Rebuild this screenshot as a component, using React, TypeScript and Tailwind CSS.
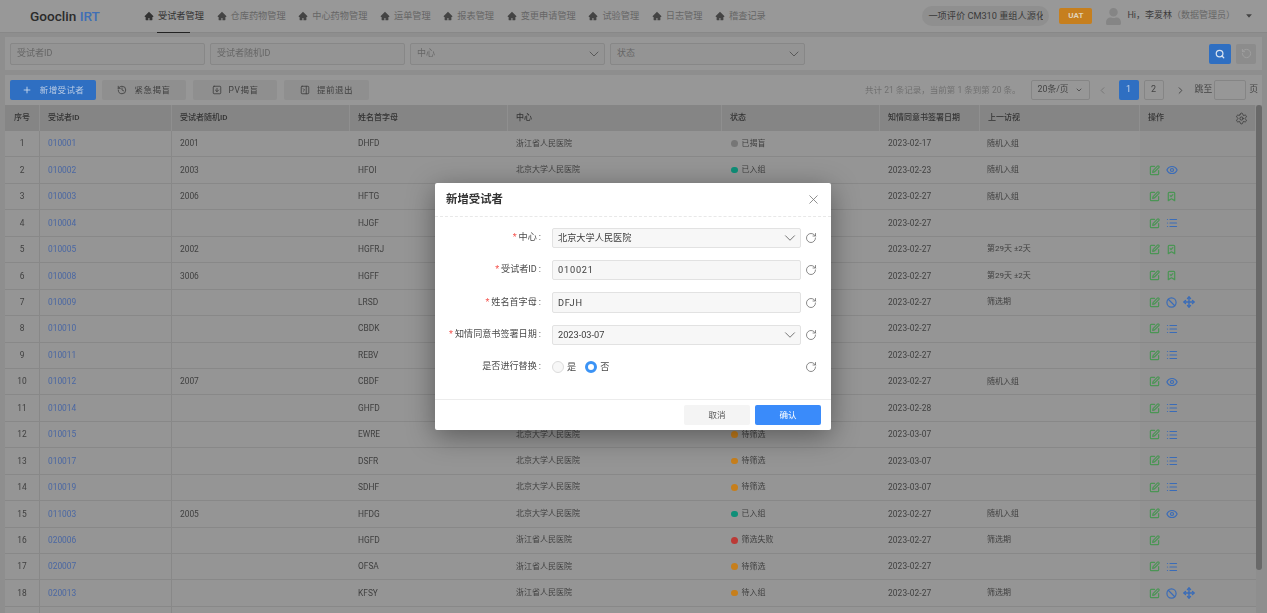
import { AiFillCaretDown, AiFillHome } from 'react-icons/ai';
import { FaUser } from 'react-icons/fa';
import {
  Ban,
  BookmarkCheck,
  ChevronDown,
  ChevronLeft,
  ChevronRight,
  Eye,
  History,
  List,
  Move,
  PanelRightClose,
  Plus,
  RotateCcw,
  RotateCw,
  Search,
  Settings,
  SquareArrowDown,
  SquarePen,
  X,
} from 'lucide-react';

const navItems = ['受试者管理', '仓库药物管理', '中心药物管理', '运单管理', '报表管理', '变更申请管理', '试验管理', '日志管理', '稽查记录'];

const columns = ['序号', '受试者ID', '受试者随机ID', '姓名首字母', '中心', '状态', '知情同意书签署日期', '上一访视', '操作'];

const BJ = '北京大学人民医院';
const ZJ = '浙江省人民医院';

const dotColors: Record<string, string> = {
  已揭盲: 'bg-[#767676]',
  已入组: 'bg-[#0f8f78]',
  待筛选: 'bg-[#c77f1c]',
  待入组: 'bg-[#c77f1c]',
  筛选失败: 'bg-[#bb3a36]',
};

type Row = [string, string, string, string, string, string, string, string];

const rows: Row[] = [
  ['010001', '2001', 'DHFD', ZJ, '已揭盲', '2023-02-17', '随机入组', ''],
  ['010002', '2003', 'HFOI', BJ, '已入组', '2023-02-23', '随机入组', 'ev'],
  ['010003', '2006', 'HFTG', BJ, '已入组', '2023-02-27', '随机入组', 'ec'],
  ['010004', '', 'HJGF', BJ, '待筛选', '2023-02-27', '', 'el'],
  ['010005', '2002', 'HGFRJ', BJ, '已入组', '2023-02-27', '第29天 ±2天', 'ec'],
  ['010008', '3006', 'HGFF', BJ, '已入组', '2023-02-27', '第29天 ±2天', 'ec'],
  ['010009', '', 'LRSD', BJ, '待入组', '2023-02-27', '筛选期', 'ebm'],
  ['010010', '', 'CBDK', BJ, '待筛选', '2023-02-27', '', 'el'],
  ['010011', '', 'REBV', BJ, '待筛选', '2023-02-27', '', 'el'],
  ['010012', '2007', 'CBDF', BJ, '已入组', '2023-02-27', '随机入组', 'ev'],
  ['010014', '', 'GHFD', BJ, '待筛选', '2023-02-28', '', 'el'],
  ['010015', '', 'EWRE', BJ, '待筛选', '2023-03-07', '', 'el'],
  ['010017', '', 'DSFR', BJ, '待筛选', '2023-03-07', '', 'el'],
  ['010019', '', 'SDHF', BJ, '待筛选', '2023-03-07', '', 'el'],
  ['011003', '2005', 'HFDG', BJ, '已入组', '2023-02-27', '随机入组', 'ev'],
  ['020006', '', 'HGFD', ZJ, '筛选失败', '2023-02-27', '筛选期', 'e'],
  ['020007', '', 'OFSA', ZJ, '待筛选', '2023-02-27', '', 'el'],
  ['020013', '', 'KFSY', ZJ, '待入组', '2023-02-27', '筛选期', 'ebm'],
];

const gridCols = 'grid grid-cols-[35px_132px_178px_158px_214px_158px_100px_160px_116px]';

function OpIcon({ kind }: { kind: string }) {
  if (kind === 'e') return <SquarePen size={11} strokeWidth={2.6} className="text-[#4b9555]" />;
  if (kind === 'c') return <BookmarkCheck size={11} strokeWidth={2.6} className="text-[#4b9555]" />;
  if (kind === 'v') return <Eye size={12} strokeWidth={2.4} className="text-[#3a6cb8]" />;
  if (kind === 'l') return <List size={12} strokeWidth={2.4} className="text-[#3a6cb8]" />;
  if (kind === 'b') return <Ban size={11} strokeWidth={2.6} className="text-[#3a6cb8]" />;
  return <Move size={12} strokeWidth={2.8} className="text-[#3a6cb8]" />;
}

function FilterBox({ label, select }: { label: string; select?: boolean }) {
  return (
    <div className="flex h-[22px] w-[195px] items-center justify-between rounded-[2px] border border-[#878787] bg-[#949494] pl-[6px] pr-[2px] text-[9px] text-[#666]">
      <span>{label}</span>
      {select && <ChevronDown size={16} strokeWidth={1.4} className="text-[#555]" />}
    </div>
  );
}

function ToolButton({ icon, label, width }: { icon: React.ReactNode; label: string; width: string }) {
  return (
    <div className={`flex h-[20px] items-center justify-center gap-[7px] rounded-[2px] bg-[#8f8f8f] text-[8.5px] tracking-[0.5px] text-[#3f3f3f] ${width}`}>
      {icon}
      <span>{label}</span>
    </div>
  );
}

function ModalField({ label, required, children }: { label: string; required?: boolean; children: React.ReactNode }) {
  return (
    <div className="flex h-[20.5px] items-center">
      <div className="flex w-[106px] items-center justify-end text-[9.1px] whitespace-nowrap text-[#4a4a4a]">
        {required && <span className="mr-[2px] text-[#f5544f]">*</span>}
        <span>{label}</span>
        <span className="ml-[2px]">:</span>
      </div>
      <div className="ml-[11px] w-[249px]">{children}</div>
      <RotateCw size={12} strokeWidth={1.5} className="ml-[4px] text-[#666]" />
    </div>
  );
}

function ModalInput({ value, select, wide }: { value: string; select?: boolean; wide?: boolean }) {
  return (
    <div className="flex h-[20.5px] items-center justify-between rounded-[2px] border border-[#e2e2e2] bg-[#f7f7f7] pl-[5px] pr-[1px] text-[9.2px] text-[#3c3c3c]">
      <span className={wide ? 'tracking-[0.8px]' : ''}>{value}</span>
      {select && <ChevronDown size={18} strokeWidth={1.2} className="text-[#666]" />}
    </div>
  );
}

export default function App() {
  return (
    <div className="relative h-screen overflow-hidden bg-[#8e8e8e] font-['Roboto','Noto_Sans_CJK_SC',sans-serif]">
      <div className="blur-[0.4px]">
        {/* Top bar */}
        <div className="flex h-[33px] items-center border-b border-[#888] bg-[#989898] pl-[30px] pr-[14px]">
          <div className="w-[71px] text-[13.6px] font-medium whitespace-nowrap text-[#2b2b2b]">
            Gooclin <span className="text-[#3f6fb5]">IRT</span>
          </div>
          <div className="ml-[43px] flex items-center gap-[12.6px]">
            {navItems.map((item, i) => (
              <div key={item} className="relative flex h-[33px] items-center gap-[4px]">
                <AiFillHome size={10} className={i === 0 ? 'text-[#333]' : 'text-[#444]'} />
                <span className={`text-[9.2px] ${i === 0 ? 'text-[#333]' : 'text-[#666]'}`}>{item}</span>
                {i === 0 && <div className="absolute bottom-0 left-[13px] h-[1px] w-[33px] bg-[#222]" />}
              </div>
            ))}
          </div>
          <div className="ml-auto flex h-[20px] w-[127px] items-center rounded-full bg-[#8f8f8f] px-[6px]">
            <div className="overflow-hidden text-[9.2px] whitespace-nowrap text-[#3a3a3a]">一项评价 CM310 重组人源化单抗</div>
          </div>
          <div className="ml-[10px] flex h-[16px] w-[33px] items-center justify-center rounded-[2px] bg-[#c67f1e] text-[8px] font-bold text-[#e0d2b8]">
            UAT
          </div>
          <div className="ml-[12px] flex w-[18px] justify-center">
            <FaUser size={17} className="text-[#858585]" />
          </div>
          <div className="ml-[5px] text-[9px] whitespace-nowrap text-[#3d3d3d]">
            Hi，李爱林<span className="text-[#666]">（数据管理员）</span>
          </div>
          <AiFillCaretDown size={8} className="ml-[10px] text-[#444]" />
        </div>

        {/* Filters */}
        <div className="mx-[5px] mt-[4px] flex h-[33px] items-center gap-[5px] bg-[#979797] px-[5px]">
          <FilterBox label="受试者ID" />
          <FilterBox label="受试者随机ID" />
          <FilterBox label="中心" select />
          <FilterBox label="状态" select />
          <div className="ml-auto flex items-center gap-[5px] pr-[1px]">
            <div className="flex h-[20px] w-[22px] items-center justify-center rounded-[2px] bg-[#2f6fc2]">
              <Search size={10} strokeWidth={3} className="text-[#d8e2f0]" />
            </div>
            <div className="flex h-[20px] w-[20px] items-center justify-center rounded-[2px] bg-[#8c8c8c]">
              <RotateCcw size={11} className="text-[#a0a0a0]" />
            </div>
          </div>
        </div>

        {/* Toolbar */}
        <div className="mx-[5px] mt-[5px] flex h-[30px] items-center bg-[#979797] pl-[5px]">
          <div className="flex h-[20px] w-[86px] items-center justify-center gap-[8px] rounded-[2px] bg-[#2f6fc2] text-[8.5px] tracking-[0.4px] text-[#b9cbe4]">
            <Plus size={10} strokeWidth={2} className="text-[#d5e0ef]" />
            <span>新增受试者</span>
          </div>
          <div className="ml-[6px] flex gap-[7px]">
            <ToolButton icon={<History size={10} />} label="紧急揭盲" width="w-[84px]" />
            <ToolButton icon={<SquareArrowDown size={10} />} label="PV揭盲" width="w-[84px]" />
            <ToolButton icon={<PanelRightClose size={10} />} label="提前退出" width="w-[85px]" />
          </div>
          <div className="ml-auto text-[8.5px] text-[#707070]">共计 21 条记录，当前第 1 条到第 20 条。</div>
          <div className="ml-[10px] flex h-[20px] w-[59px] items-center justify-center gap-[6px] rounded-[2px] border border-[#858585] text-[8.8px] text-[#444]">
            20条/页
            <ChevronDown size={8} strokeWidth={2.5} />
          </div>
          <ChevronLeft size={11} className="ml-[7px] text-[#757575]" />
          <div className="ml-[11px] flex h-[20px] w-[20px] items-center justify-center rounded-[2px] bg-[#2f6fc2] text-[9px] text-[#c8d6ea]">1</div>
          <div className="ml-[5px] flex h-[20px] w-[20px] items-center justify-center rounded-[2px] border border-[#858585] text-[9px] text-[#444]">2</div>
          <ChevronRight size={11} className="ml-[11px] text-[#444]" />
          <span className="ml-[9px] text-[8.8px] text-[#444]">跳至</span>
          <div className="ml-[2px] h-[20px] w-[32px] rounded-[2px] border border-[#858585]" />
          <span className="ml-[3px] mr-[4px] text-[8.8px] text-[#444]">页</span>
        </div>

        {/* Table */}
        <div className="ml-[5px] flex">
          <div className="w-[1251px]">
            <div className={`${gridCols} h-[26px] bg-[#858585] text-[8px] font-medium text-[#333]`}>
              {columns.map((col, i) => (
                <div
                  key={col}
                  className={`flex items-center border-r border-[#8f8f8f] ${i === 0 ? 'justify-center' : 'px-[8px]'} ${i === 8 ? 'justify-between pr-[7px]' : ''}`}
                >
                  {col}
                  {i === 8 && <Settings size={13} strokeWidth={1.4} className="text-[#333]" />}
                </div>
              ))}
            </div>
            {rows.map((row, i) => (
              <div key={row[0]} className={`${gridCols} h-[26.45px] border-b border-[#888] bg-[#959595] text-[8px] text-[#3f3f3f]`}>
                <div className="flex items-center justify-center border-r border-[#888] text-[8.4px]">{i + 1}</div>
                <div className="flex items-center border-r border-[#888] px-[8px] text-[8.4px] text-[#4a67a3]">{row[0]}</div>
                <div className="flex items-center px-[8px] text-[8.4px]">{row[1]}</div>
                <div className="flex items-center px-[8px] text-[8.4px]">{row[2]}</div>
                <div className="flex items-center px-[8px]">{row[3]}</div>
                <div className="flex items-center gap-[4px] px-[9px]">
                  <span className={`h-[6.5px] w-[6.5px] rounded-full ${dotColors[row[4]]}`} />
                  {row[4]}
                </div>
                <div className="flex items-center px-[8px] text-[8.4px] tracking-[0.1px]">{row[5]}</div>
                <div className="flex items-center px-[7px]">{row[6]}</div>
                <div className="flex items-center gap-[6px] bg-[#929292] px-[9px]">
                  {row[7].split('').map((kind, k) => (
                    <OpIcon key={k} kind={kind} />
                  ))}
                </div>
              </div>
            ))}
            <div className={`${gridCols} h-[26px] bg-[#959595]`}>
              <div className="border-r border-[#888]" />
              <div className="border-r border-[#888]" />
            </div>
          </div>
          <div className="h-[465px] w-[6px] rounded-[3px] bg-[#696969]" />
        </div>
      </div>

      {/* Modal */}
      <div className="fixed inset-0 flex items-center justify-center">
        <div className="mr-[1px] flex h-[247px] w-[396px] flex-col rounded-[2px] bg-white shadow-[0_6px_28px_rgba(0,0,0,0.4)]">
          <div className="flex h-[33.5px] items-center justify-between border-b border-dashed border-[#e8e8e8] pl-[11px] pr-[10px]">
            <span className="text-[11.4px] font-semibold text-[#333]">新增受试者</span>
            <X size={15} strokeWidth={1.3} className="text-[#777]" />
          </div>
          <div className="flex flex-1 flex-col gap-[11.9px] pt-[11px]">
            <ModalField label="中心" required>
              <ModalInput value="北京大学人民医院" select />
            </ModalField>
            <ModalField label="受试者ID" required>
              <ModalInput value="010021" wide />
            </ModalField>
            <ModalField label="姓名首字母" required>
              <ModalInput value="DFJH" wide />
            </ModalField>
            <ModalField label="知情同意书签署日期" required>
              <ModalInput value="2023-03-07" select />
            </ModalField>
            <ModalField label="是否进行替换">
              <div className="flex items-center text-[9.2px] text-[#4a4a4a]">
                <span className="h-[12px] w-[12px] rounded-full border border-[#dcdcdc] bg-[#f7f7f7]" />
                <span className="ml-[3px]">是</span>
                <span className="ml-[9px] h-[12px] w-[12px] rounded-full border-[3px] border-[#3b93f5] bg-white" />
                <span className="ml-[3px]">否</span>
              </div>
            </ModalField>
          </div>
          <div className="flex h-[31px] items-center justify-end gap-[5px] border-t border-[#ececec] pr-[10px]">
            <div className="flex h-[20px] w-[66px] items-center justify-center rounded-[2px] bg-[#f4f4f4] text-[8.5px] text-[#555]">取消</div>
            <div className="flex h-[20px] w-[66px] items-center justify-center rounded-[2px] bg-[#3a8bfa] text-[8.5px] text-white">确认</div>
          </div>
        </div>
      </div>
    </div>
  );
}
